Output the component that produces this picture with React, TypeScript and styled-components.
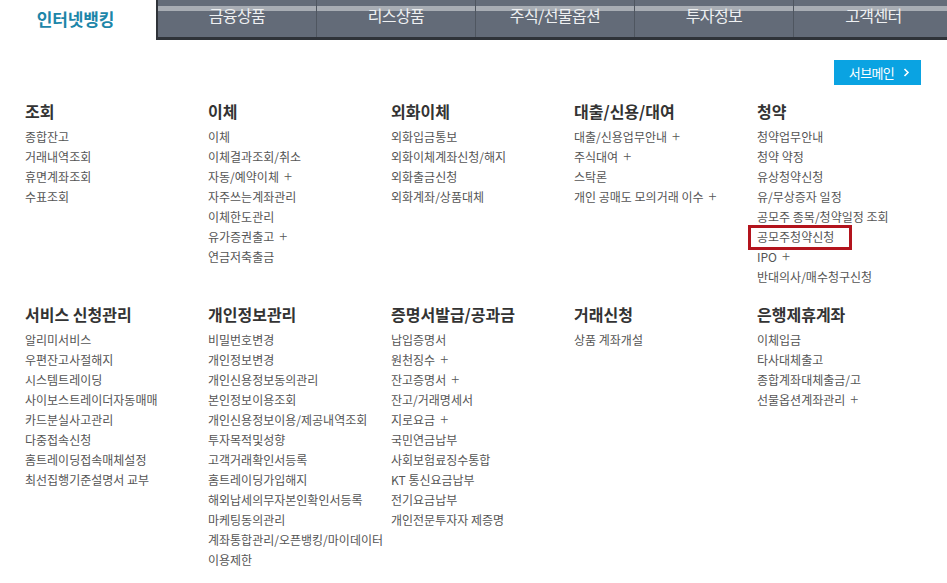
import React from 'react'
import styled, { createGlobalStyle } from 'styled-components'

type Menu = {
  title: string
  items: string[]
  highlight?: string
}

const topMenus: Menu[] = [
  { title: '조회', items: ['종합잔고', '거래내역조회', '휴면계좌조회', '수표조회'] },
  {
    title: '이체',
    items: ['이체', '이체결과조회/취소', '자동/예약이체 +', '자주쓰는계좌관리', '이체한도관리', '유가증권출고 +', '연금저축출금'],
  },
  { title: '외화이체', items: ['외화입금통보', '외화이체계좌신청/해지', '외화출금신청', '외화계좌/상품대체'] },
  { title: '대출/신용/대여', items: ['대출/신용업무안내 +', '주식대여 +', '스탁론', '개인 공매도 모의거래 이수 +'] },
  {
    title: '청약',
    items: [
      '청약업무안내',
      '청약 약정',
      '유상청약신청',
      '유/무상증자 일정',
      '공모주 종목/청약일정 조회',
      '공모주청약신청',
      'IPO +',
      '반대의사/매수청구신청',
    ],
    highlight: '공모주청약신청',
  },
]

const bottomMenus: Menu[] = [
  {
    title: '서비스 신청관리',
    items: [
      '알리미서비스',
      '우편잔고사절해지',
      '시스템트레이딩',
      '사이보스트레이더자동매매',
      '카드분실사고관리',
      '다중접속신청',
      '홈트레이딩접속매체설정',
      '최선집행기준설명서 교부',
    ],
  },
  {
    title: '개인정보관리',
    items: [
      '비밀번호변경',
      '개인정보변경',
      '개인신용정보동의관리',
      '본인정보이용조회',
      '개인신용정보이용/제공내역조회',
      '투자목적및성향',
      '고객거래확인서등록',
      '홈트레이딩가입해지',
      '해외납세의무자본인확인서등록',
      '마케팅동의관리',
      '계좌통합관리/오픈뱅킹/마이데이터',
      '이용제한',
    ],
  },
  {
    title: '증명서발급/공과금',
    items: [
      '납입증명서',
      '원천징수 +',
      '잔고증명서 +',
      '잔고/거래명세서',
      '지로요금 +',
      '국민연금납부',
      '사회보험료징수통합',
      'KT 통신요금납부',
      '전기요금납부',
      '개인전문투자자 제증명',
    ],
  },
  { title: '거래신청', items: ['상품 계좌개설'] },
  { title: '은행제휴계좌', items: ['이체입금', '타사대체출고', '종합계좌대체출금/고', '선물옵션계좌관리 +'] },
]

const tabs = ['금융상품', '리스상품', '주식/선물옵션', '투자정보', '고객센터']

const GlobalStyle = createGlobalStyle`
  * { box-sizing: border-box; }
  body {
    margin: 0;
    background: #ffffff;
    font-family: "Noto Sans CJK KR", "Noto Sans", sans-serif;
  }
`

// items ending in " +" have a sub menu; the plus is drawn a bit larger
const renderLabel = (label: string) => {
  if (!label.endsWith(' +')) return label
  return (
    <>
      {label.slice(0, -2)}
      <Plus>+</Plus>
    </>
  )
}

export default function App() {
  return (
    <Page>
      <GlobalStyle />
      <Header>
        <Logo>인터넷뱅킹</Logo>
        <Nav>
          {tabs.map((t) => (
            <Tab key={t}>{t}</Tab>
          ))}
        </Nav>
      </Header>
      <Toolbar>
        <SubMainButton>
          서브메인
          <svg width="7" height="9" viewBox="0 0 7 9">
            <path d="M1.5 1 L5 4.5 L1.5 8" fill="none" stroke="#fff" strokeWidth="1.6" />
          </svg>
        </SubMainButton>
      </Toolbar>
      <MenuGrid>
        {[...topMenus, ...bottomMenus].map((m) => (
          <Column key={m.title}>
            <Heading>{m.title}</Heading>
            <ItemList>
              {m.items.map((it) => (
                <Item key={it} $marked={it === m.highlight}>
                  {renderLabel(it)}
                </Item>
              ))}
            </ItemList>
          </Column>
        ))}
      </MenuGrid>
    </Page>
  )
}

const Page = styled.div`
  width: 947px;
  height: 583px;
  overflow: hidden;
`

const Header = styled.div`
  display: flex;
  height: 40px;
`

const Logo = styled.div`
  width: 156px;
  flex-shrink: 0;
  display: flex;
  align-items: center;
  justify-content: center;
  padding-right: 5px;
  padding-bottom: 3px;
  font-size: 17px;
  font-weight: 700;
  letter-spacing: -0.1px;
  color: #1c86a9;
`

const Nav = styled.div`
  flex: 1;
  display: flex;
  border-left: 2px solid #2f3339;
  border-bottom: 3px solid #2f3339;
  background: linear-gradient(
    to bottom,
    #646c79 0,
    #646c79 6px,
    #a8adb4 6px,
    #a8adb4 11px,
    #636b78 11px,
    #636b78 100%
  );
`

const Tab = styled.div`
  width: 159px;
  flex-shrink: 0;
  display: flex;
  align-items: center;
  justify-content: center;
  padding-bottom: 8px;
  border-right: 1px solid #4f5660;
  font-size: 16px;
  letter-spacing: -0.6px;
  color: #eef0f2;

  &:last-child {
    flex: 1;
    border-right: none;
  }
`

const Toolbar = styled.div`
  display: flex;
  justify-content: flex-end;
  padding: 20px 26px 0 0;
`

const SubMainButton = styled.button`
  width: 87px;
  height: 25px;
  display: flex;
  align-items: center;
  justify-content: center;
  gap: 9px;
  padding: 0 0 1px 4px;
  border: none;
  background: #0aa3e2;
  color: #ffffff;
  font-family: inherit;
  font-size: 13px;
  letter-spacing: -0.6px;
  cursor: pointer;
`

const MenuGrid = styled.div`
  display: grid;
  grid-template-columns: repeat(5, 183px);
  row-gap: 17px;
  padding: 16px 0 0 25px;
`

const Column = styled.div`
  display: flex;
  flex-direction: column;
`

const Heading = styled.div`
  font-size: 16px;
  line-height: 20px;
  font-weight: 700;
  color: #333333;
  margin-bottom: 6px;
`

const ItemList = styled.ul`
  margin: 0;
  padding: 0;
  list-style: none;
`

const Item = styled.li<{ $marked?: boolean }>`
  position: relative;
  font-size: 12px;
  line-height: 20px;
  color: #555555;
  white-space: nowrap;

  ${(p) =>
    p.$marked &&
    `
    &::after {
      content: '';
      position: absolute;
      top: -2px;
      bottom: -3px;
      left: -9px;
      width: 98px;
      border: 3px solid #b3141d;
    }
  `}
`

const Plus = styled.span`
  margin-left: 5px;
  font-size: 15px;
  font-weight: 300;
  line-height: 1;
`
